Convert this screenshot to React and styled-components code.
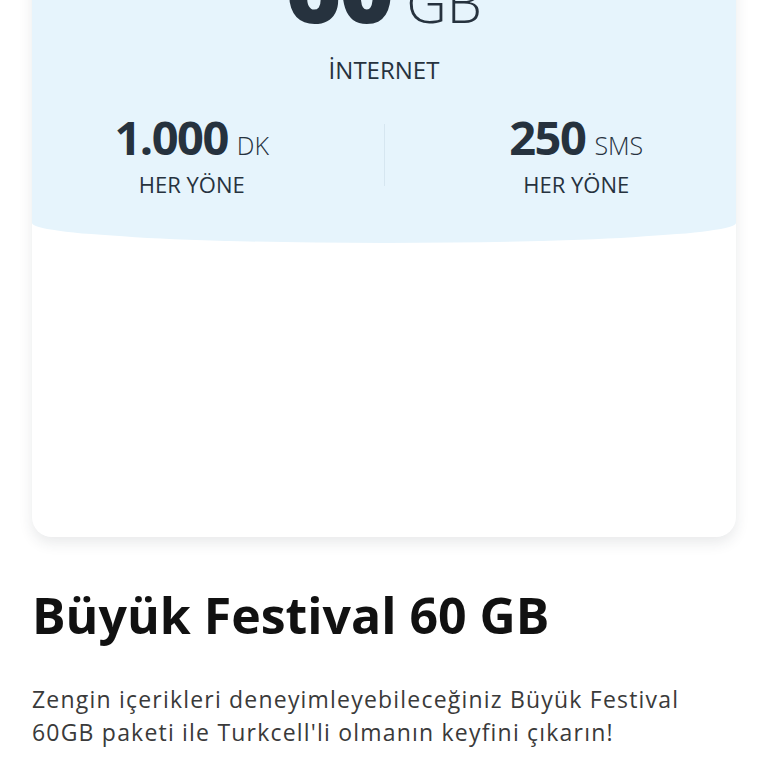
import React from 'react'
import styled, { createGlobalStyle } from 'styled-components'

const GlobalStyle = createGlobalStyle`
  html, body {
    margin: 0;
    padding: 0;
    background: #ffffff;
    font-family: "Open Sans", "Noto Sans", sans-serif;
    overflow: hidden;
  }
`

const stats = [
  { value: '1.000', unit: 'DK', label: 'HER YÖNE' },
  { value: '250', unit: 'SMS', label: 'HER YÖNE' },
]

export default function App() {
  return (
    <>
      <GlobalStyle />
      <Page>
        <Card>
          <Hero>
            <Amount>
              <Big>60</Big>
              <Unit size={56}>GB</Unit>
            </Amount>
            <Caption>İNTERNET</Caption>
            <Stats>
              {stats.map((s, i) => (
                <React.Fragment key={s.unit}>
                  {i > 0 && <Divider />}
                  <Stat>
                    <StatValue>
                      <Mid>{s.value}</Mid>
                      <Unit size={25}>{s.unit}</Unit>
                    </StatValue>
                    <StatLabel>{s.label}</StatLabel>
                  </Stat>
                </React.Fragment>
              ))}
            </Stats>
          </Hero>
        </Card>
        <Title>Büyük Festival 60 GB</Title>
        <Description>
          Zengin içerikleri deneyimleyebileceğiniz Büyük Festival 60GB paketi ile Turkcell'li olmanın keyfini çıkarın!
        </Description>
      </Page>
    </>
  )
}

const Page = styled.div`
  padding: 0 32px 40px;
`

const Card = styled.div`
  margin-top: -70px;
  height: 607px;
  background: #ffffff;
  border-radius: 20px;
  box-shadow: 0 6px 14px rgba(40, 50, 60, 0.1);
  overflow: hidden;
`

const Hero = styled.div`
  height: 313px;
  box-sizing: border-box;
  padding-top: 10px;
  background: #e6f4fc;
  border-radius: 0 0 50% 50% / 0 0 20px 20px;
  color: #26323e;
  text-align: center;
`

const Amount = styled.div`
  display: flex;
  justify-content: center;
  align-items: baseline;
  gap: 14px;
  line-height: 1;
`

const Big = styled.span`
  font-size: 94px;
  font-weight: 800;
  letter-spacing: -2px;
`

const Mid = styled.span`
  font-size: 47px;
  font-weight: 700;
  letter-spacing: -1.5px;
`

const Unit = styled.span`
  font-size: ${p => p.size}px;
  font-weight: 300;
`

const Caption = styled.div`
  margin-top: 24px;
  font-size: 24px;
  line-height: 1;
`

const Stats = styled.div`
  display: grid;
  grid-template-columns: 1fr 1px 1fr;
  align-items: center;
  margin: 32px -32px 0;
`

const Stat = styled.div`
  display: flex;
  flex-direction: column;
  align-items: center;
  gap: 12px;
`

const StatValue = styled.div`
  display: flex;
  align-items: baseline;
  gap: 9px;
  line-height: 1;
`

const StatLabel = styled.div`
  font-size: 22px;
  line-height: 1;
`

const Divider = styled.div`
  height: 62px;
  background: #d6e6f0;
`

const Title = styled.h1`
  margin: 48px 0 0;
  font-size: 50px;
  font-weight: 700;
  line-height: 1.2;
  color: #111111;
`

const Description = styled.p`
  margin: 38px 0 0;
  font-size: 23px;
  line-height: 33px;
  letter-spacing: 1.2px;
  color: #3a3a3a;
`
